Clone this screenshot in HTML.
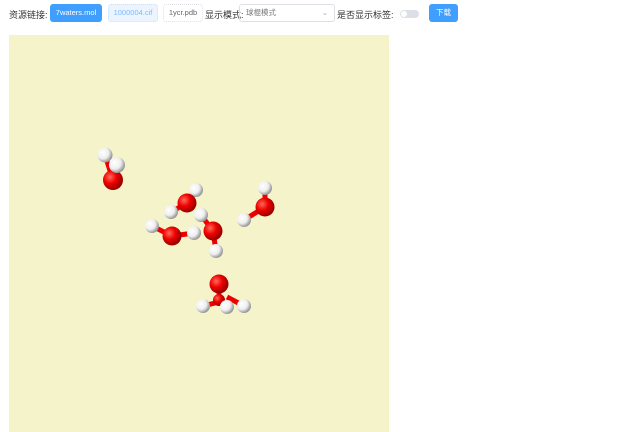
<!DOCTYPE html><html><head><meta charset="utf-8"><style>
body{margin:0;width:640px;height:432px;background:#fff;font-family:"Liberation Sans","Noto Sans CJK SC",sans-serif;font-size:9px;color:#333;position:relative;overflow:hidden}
.a{position:absolute;box-sizing:border-box;border-radius:3px;text-align:center;line-height:18px;height:18px;top:4px;font-size:7.5px}
</style></head><body>
<div style="position:absolute;left:9px;top:8px;font-size:9px">资源链接:</div>
<div class="a" style="left:50px;width:52px;background:#409eff;color:#fff">7waters.mol</div>
<div class="a" style="left:108px;width:50px;background:#ecf5ff;border:1px dotted #c6e2ff;color:#79bbff;line-height:16px">1000004.cif</div>
<div class="a" style="left:163px;width:40px;border:1px dotted #dcdfe6;color:#666;line-height:16px">1ycr.pdb</div>
<div style="position:absolute;left:205px;top:8px">显示模式:</div>
<div class="a" style="left:239px;width:96px;border:1px solid #dcdfe6;color:#777;text-align:left;padding-left:6px;line-height:16px">球棍模式<span style="position:absolute;right:6px;color:#aaa">⌄</span></div>
<div style="position:absolute;left:337px;top:8px">是否显示标签:</div>
<div style="position:absolute;left:400px;top:10px;width:19px;height:8px;border-radius:4px;background:#dcdfe6"><div style="position:absolute;left:1px;top:1px;width:6px;height:6px;border-radius:50%;background:#fff"></div></div>
<div class="a" style="left:429px;width:29px;background:#409eff;color:#fff">下载</div>
<svg style="position:absolute;left:0;top:0" width="640" height="432">
<defs>
<radialGradient id="r" cx="35%" cy="35%" r="65%"><stop offset="0" stop-color="#ff6a5a"/><stop offset=".5" stop-color="#e00"/><stop offset="1" stop-color="#900"/></radialGradient>
<radialGradient id="w" cx="35%" cy="35%" r="65%"><stop offset="0" stop-color="#fff"/><stop offset=".6" stop-color="#eee"/><stop offset="1" stop-color="#999"/></radialGradient>
</defs>
<rect x="9" y="35" width="380" height="397" fill="#f5f3c9"/>
<g stroke="#e00" stroke-width="5">
<line x1="113" y1="180" x2="105" y2="155"/><line x1="113" y1="180" x2="117" y2="165"/>
<line x1="187" y1="203" x2="196" y2="190"/><line x1="187" y1="203" x2="171" y2="212"/>
<line x1="172" y1="236" x2="152" y2="226"/><line x1="172" y1="236" x2="194" y2="233"/>
<line x1="213" y1="231" x2="201" y2="215"/><line x1="213" y1="231" x2="216" y2="251"/>
<line x1="265" y1="207" x2="265" y2="188"/><line x1="265" y1="207" x2="244" y2="220"/>
<line x1="219" y1="284" x2="219" y2="302"/><line x1="219" y1="302" x2="203" y2="306"/><line x1="219" y1="302" x2="227" y2="307"/><line x1="227" y1="297" x2="244" y2="306"/>
</g>
<g fill="url(#w)">
<circle cx="105" cy="155" r="7.5"/>
<circle cx="196" cy="190" r="7"/><circle cx="171" cy="212" r="7"/>
<circle cx="152" cy="226" r="7"/><circle cx="194" cy="233" r="7"/>
<circle cx="201" cy="215" r="7"/><circle cx="216" cy="251" r="7"/>
<circle cx="265" cy="188" r="7"/><circle cx="244" cy="220" r="7"/>
</g>
<g fill="url(#r)">
<circle cx="113" cy="180" r="10"/>
<circle cx="187" cy="203" r="9.5"/><circle cx="172" cy="236" r="9.5"/><circle cx="213" cy="231" r="9.5"/><circle cx="265" cy="207" r="9.5"/>
<circle cx="219" cy="284" r="9.5"/><circle cx="219" cy="300" r="6"/>
</g>
<g fill="url(#w)">
<circle cx="117" cy="165" r="8"/>
<circle cx="203" cy="306" r="7"/><circle cx="227" cy="307" r="7"/><circle cx="244" cy="306" r="7"/>
</g>
</svg>
</body></html>
